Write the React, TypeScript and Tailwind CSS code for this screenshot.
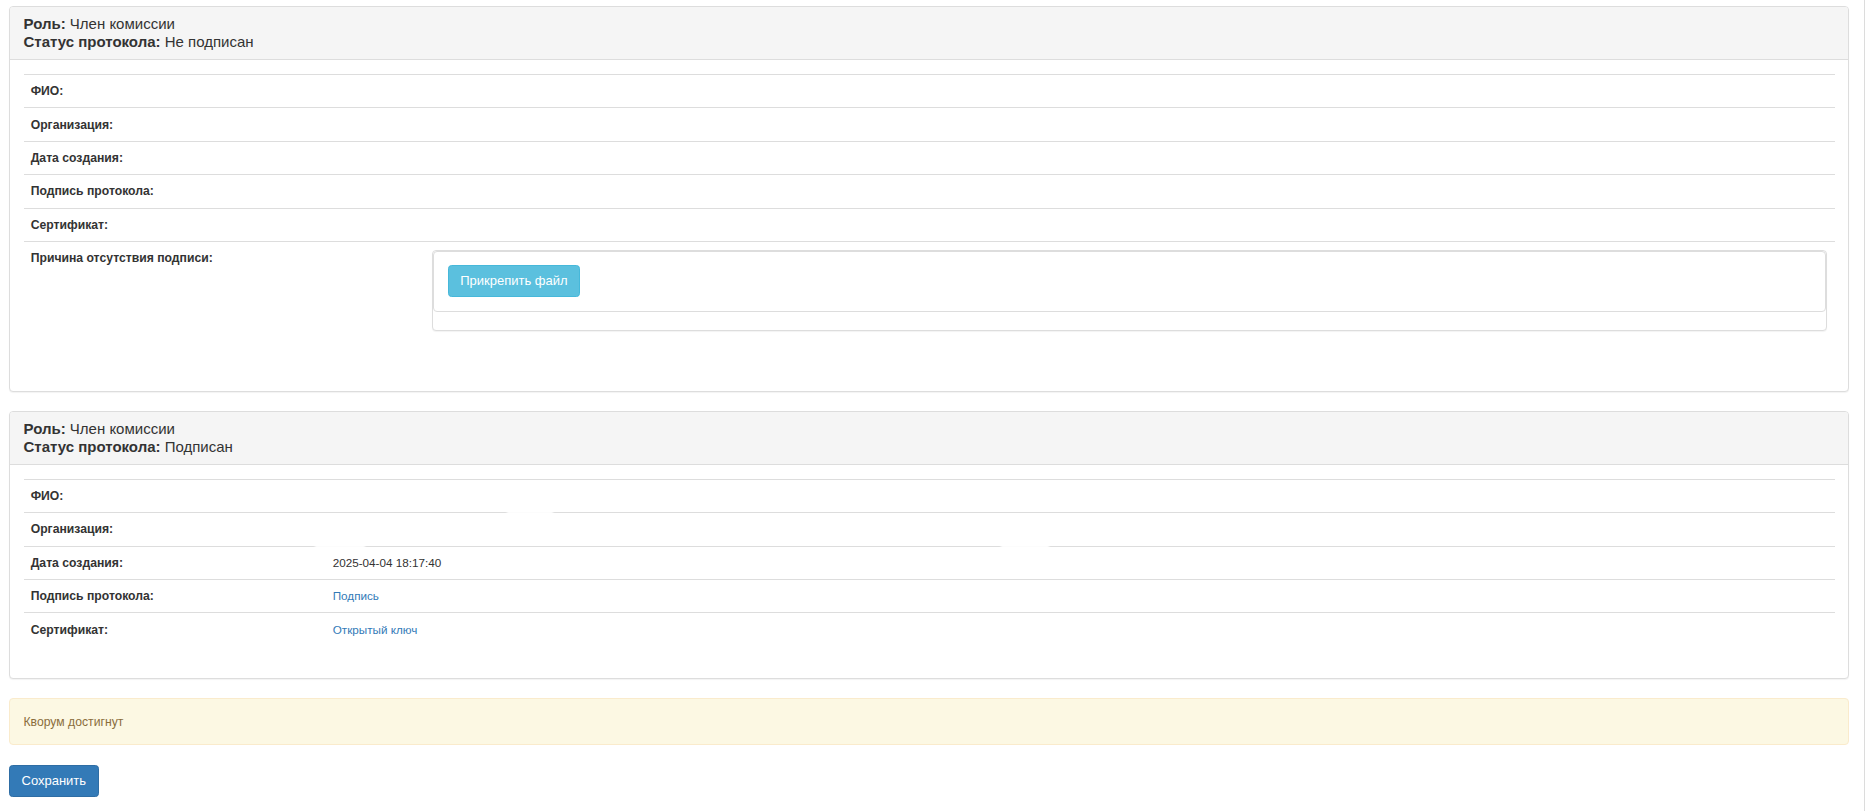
import React from 'react';

interface Row {
  label: string;
  value?: React.ReactNode;
  patches?: { left: number; width: number }[];
}

const linkCls = 'text-[#337ab7] hover:underline cursor-pointer';

function InfoRow({ row, labelWidth }: { row: Row; labelWidth: string }) {
  return (
    <div className="relative flex border-t border-[#dddddd]">
      <div className={`${labelWidth} shrink-0 px-[7.2px] py-[7.2px] text-[12.2px] font-bold leading-[18px]`}>{row.label}</div>
      <div className="flex-1 px-[7.2px] py-[7.2px] text-[11.7px] leading-[18px]">{row.value}</div>
      {row.patches?.map((p, i) => (
        <span
          key={i}
          className="absolute -top-[2px] h-[5px] bg-white blur-[1px]"
          style={{ left: p.left, width: p.width }}
        />
      ))}
    </div>
  );
}

function ProtocolPanel({
  status,
  rows,
  labelWidth,
  children,
}: {
  status: string;
  rows: Row[];
  labelWidth: string;
  children?: React.ReactNode;
}) {
  return (
    <div className="mb-[19px] rounded-[4px] border border-[#dddddd] bg-white shadow-[0_1px_1px_rgba(0,0,0,0.05)]">
      <div className="rounded-t-[3px] border-b border-[#dddddd] bg-[#f5f5f5] px-[13.5px] py-[8px] text-[15px] leading-[18px] text-[#333333]">
        <div>
          <b>Роль:</b> Член комиссии
        </div>
        <div>
          <b>Статус протокола:</b> {status}
        </div>
      </div>
      <div className="px-[13.5px] pt-[14px] pb-[13.5px]">
        <div className="mb-[19px] text-[#333333]">
          {rows.map((r) => (
            <InfoRow key={r.label} row={r} labelWidth={labelWidth} />
          ))}
          {children}
        </div>
      </div>
    </div>
  );
}

export default function App() {
  const emptyRows: Row[] = [
    { label: 'ФИО:' },
    { label: 'Организация:' },
    { label: 'Дата создания:' },
    { label: 'Подпись протокола:' },
    { label: 'Сертификат:' },
  ];

  const signedRows: Row[] = [
    { label: 'ФИО:' },
    { label: 'Организация:', patches: [{ left: 483, width: 46 }] },
    {
      label: 'Дата создания:',
      value: '2025-04-04 18:17:40',
      patches: [
        { left: 291, width: 50 },
        { left: 977, width: 48 },
      ],
    },
    { label: 'Подпись протокола:', value: <a className={linkCls}>Подпись</a> },
    { label: 'Сертификат:', value: <a className={linkCls}>Открытый ключ</a> },
  ];

  return (
    <div className="min-h-[811px] w-full bg-white font-['Liberation_Sans',Arial,sans-serif] text-[#333333]">
      <div className="min-h-[811px] w-[1865px] border-r border-[#dcdcdc] pl-[9px] pt-[6px]">
        <div className="w-[1840px]">
          <ProtocolPanel status="Не подписан" rows={emptyRows} labelWidth="w-[401px]">
            <div className="flex border-t border-[#dddddd]">
              <div className="w-[401px] shrink-0 px-[7.2px] py-[7.2px] text-[12.2px] font-bold leading-[18px]">
                Причина отсутствия подписи:
              </div>
              <div className="flex-1 px-[7.2px] pt-[8px] pb-[7.5px]">
                <div className="mb-[20px] h-[81px] rounded-[4px] border border-[#dddddd] bg-white shadow-[0_1px_1px_rgba(0,0,0,0.05)]">
                  <div className="h-[61px] rounded-[4px] border border-[#dddddd] px-[14px] pt-[13px]">
                    <button className="h-[32px] rounded-[3.6px] border border-[#46b8da] bg-[#5bc0de] px-[11.5px] text-[13px] leading-[18px] text-white">
                      Прикрепить файл
                    </button>
                  </div>
                </div>
              </div>
            </div>
          </ProtocolPanel>

          <ProtocolPanel status="Подписан" rows={signedRows} labelWidth="w-[302px]" />

          <div className="mb-[20px] rounded-[4px] border border-[#faebcc] bg-[#fcf8e3] px-[13.5px] py-[13.5px] text-[12.2px] leading-[18px] text-[#8a6d3b]">
            Кворум достигнут
          </div>

          <button className="h-[32px] rounded-[3.6px] border border-[#2e6da4] bg-[#337ab7] px-[11.5px] text-[13px] leading-[18px] text-white">
            Сохранить
          </button>
        </div>
      </div>
    </div>
  );
}
